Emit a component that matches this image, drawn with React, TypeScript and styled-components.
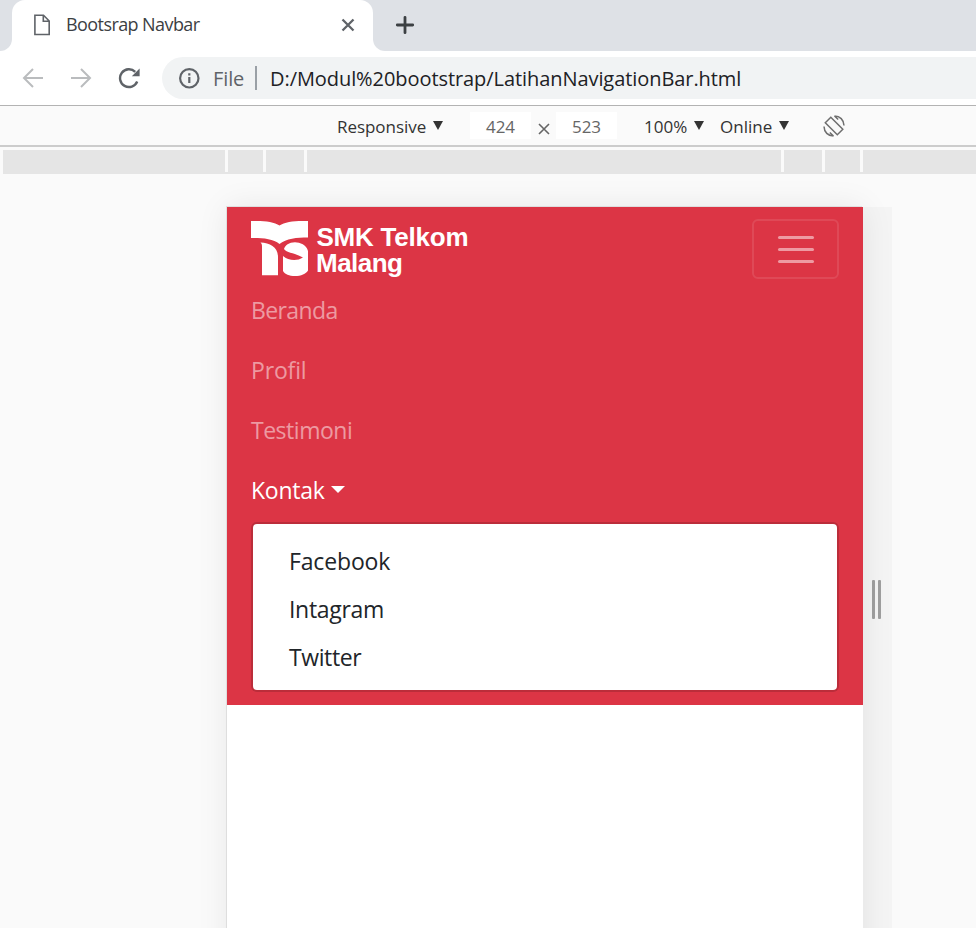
import React from "react";
import styled, { createGlobalStyle } from "styled-components";

const GlobalStyle = createGlobalStyle`
  *, *::before, *::after { box-sizing: border-box; }
  body { margin: 0; background: #fafafa; overflow: hidden; }
`;

const Window = styled.div`
  width: 976px;
  height: 928px;
  overflow: hidden;
  display: flex;
  flex-direction: column;
  background: #fafafa;
  font-family: "Open Sans", "Noto Sans", sans-serif;
`;

const Label = styled.span<{ $size: number; $spacing?: number; $color?: string }>`
  font-size: ${(p) => p.$size}px;
  letter-spacing: ${(p) => p.$spacing ?? 0}px;
  color: ${(p) => p.$color ?? "inherit"};
  white-space: nowrap;
  line-height: 1.2;
`;

const TabStrip = styled.div`
  flex: none;
  height: 51px;
  display: flex;
  background: #fff;
`;

const StripLeft = styled.div`
  width: 12px;
  background: #dee1e6;
  border-bottom-right-radius: 12px;
`;

const TabBack = styled.div`
  width: 361px;
  background: linear-gradient(#dee1e6 50%, #fff 50%);
`;

const Tab = styled.div`
  height: 51px;
  padding: 0 17px 2px 21px;
  display: flex;
  align-items: center;
  background: #fff;
  border-radius: 13px 13px 0 0;
`;

const TabTitle = styled.div`
  flex: 1;
  margin-left: 15px;
  display: flex;
`;

const StripRight = styled.div`
  flex: 1;
  padding: 0 0 2px 22px;
  display: flex;
  align-items: center;
  background: #dee1e6;
  border-bottom-left-radius: 12px;
`;

const Toolbar = styled.div`
  flex: none;
  height: 55px;
  display: flex;
  align-items: center;
  padding-left: 22px;
  background: #fff;
  border-bottom: 1px solid #b3b3b3;
`;

const NavIcons = styled.div`
  width: 140px;
  padding-bottom: 1px;
  display: flex;
  gap: 26px;
`;

const AddressBar = styled.div`
  flex: 1;
  height: 42px;
  padding-left: 16px;
  display: flex;
  align-items: center;
  background: #f1f3f4;
  border-radius: 21px 0 0 21px;
`;

const Scheme = styled.div`
  margin-left: 13px;
  padding-top: 2px;
  width: 32px;
  display: flex;
`;

const Address = styled.div`
  padding-top: 2px;
  display: flex;
`;

const Separator = styled.div`
  width: 2px;
  height: 24px;
  margin: 0 13px 0 10px;
  background: #9aa0a6;
`;

const DeviceBar = styled.div`
  flex: none;
  height: 41px;
  padding-left: 337px;
  display: flex;
  align-items: center;
  color: #333;
  background: #fafafa;
  border-bottom: 2px solid #ccc;
`;

const Select = styled.div<{ $width: number }>`
  width: ${(p) => p.$width}px;
  padding-top: 3px;
  display: flex;
  align-items: center;
  gap: 7px;
`;

const DownArrow = styled.div`
  margin-bottom: 3px;
  border: 5.5px solid transparent;
  border-top: 9px solid #333;
  border-bottom: 0;
`;

const SizeField = styled.div`
  width: 61px;
  height: 27px;
  padding-top: 3px;
  display: flex;
  align-items: center;
  justify-content: center;
  color: #666;
  background: #fff;
`;

const Times = styled.div`
  width: 25px;
  padding-top: 6px;
  display: flex;
  justify-content: center;
`;

const ZoomGap = styled.div`
  width: 27px;
`;

const Ruler = styled.div`
  flex: none;
  height: 24px;
  margin: 3px 0 0 3px;
  display: flex;
  background: #e5e5e5;
`;

const RulerSegment = styled.div<{ $width: number }>`
  width: ${(p) => p.$width}px;
  height: 22px;
  border-right: 3px solid #fafafa;
`;

const Stage = styled.div`
  flex: 1;
  padding: 33px 0 0 227px;
  display: flex;
`;

const Phone = styled.div`
  position: relative;
  width: 636px;
  background: #fff;
  box-shadow: -1px -1px 0 rgba(0, 0, 0, 0.08), 0 0 30px rgba(0, 0, 0, 0.08);
`;

const ResizeStrip = styled.div`
  width: 29px;
  height: 784px;
  display: flex;
  align-items: center;
  justify-content: center;
  gap: 3px;
  padding-right: 2px;
  background: #f4f4f4;
`;

const Grip = styled.div`
  width: 3px;
  height: 39px;
  border-radius: 1px;
  background: #9f9f9f;
`;

const Navbar = styled.nav`
  height: 498px;
  padding: 12px 24px;
  background: #dc3545;
`;

const NavHeader = styled.div`
  height: 62px;
  display: flex;
  justify-content: space-between;
`;

const Toggler = styled.button`
  width: 87px;
  height: 60px;
  padding: 0;
  display: flex;
  flex-direction: column;
  align-items: center;
  justify-content: center;
  gap: 9px;
  background: transparent;
  border: 2px solid rgba(255, 255, 255, 0.1);
  border-radius: 6px;
`;

const TogglerBar = styled.span`
  width: 36px;
  height: 3px;
  border-radius: 1.5px;
  background: rgba(255, 255, 255, 0.5);
`;

const NavLink = styled.a<{ $active?: boolean }>`
  height: 60px;
  display: flex;
  align-items: center;
  color: ${(p) => (p.$active ? "#fff" : "rgba(255, 255, 255, 0.5)")};
`;

const Caret = styled.span`
  margin: 0 0 3px 6px;
  border: 7.5px solid transparent;
  border-top-color: #fff;
  border-bottom: 0;
`;

const DropdownMenu = styled.div`
  height: 170px;
  margin-top: 1px;
  padding: 14px 36px 10px;
  color: #212529;
  background: #fff;
  background-clip: padding-box;
  border: 2px solid rgba(0, 0, 0, 0.15);
  border-radius: 6px;
`;

const DropdownItem = styled.a`
  height: 48px;
  display: flex;
  align-items: center;
`;

const LogoText = styled.text`
  font: bold 26px "Liberation Sans", Arial, sans-serif;
  fill: #fff;
`;

const Logo = () => (
  <svg width="230" height="62" viewBox="0 0 230 62">
    <g fill="#fff">
      <path d="M0 2 C12 1.500 23 2.500 28.500 6.500 C34 2.500 45 1.500 57 2 V18.500 C46 18.500 35 19.500 28.500 25 C22 19.500 11 19 0 19 Z" />
      <path d="M9.500 23.500 C19 24 27 28 27 38 V56.300 H11 V28 C11 26 11 25 9.500 23.500 Z" />
      <path d="M57 32 C55.500 26 49 23.300 44 23.300 C38 23.300 34 26.500 33 30 C36 34 44 34 52 38.500 C46 42.500 37 41.500 32 37 V52 C34 55.500 38 57 44 57 C50 57 55 55 57 51.500 Z" />
    </g>
    <LogoText x="65.500" y="27" textLength="152">SMK Telkom</LogoText>
    <LogoText x="65" y="52.500" textLength="87">Malang</LogoText>
  </svg>
);

const navLinks = [
  { text: "Beranda", spacing: -0.62 },
  { text: "Profil", spacing: -0.15 },
  { text: "Testimoni", spacing: -0.48 },
];

const contacts = [
  { text: "Facebook", spacing: -0.15 },
  { text: "Intagram", spacing: -0.3 },
  { text: "Twitter", spacing: -0.4 },
];

const rulerSegments = [225, 38, 41, 477, 41, 38];

export default function App() {
  return (
    <Window>
      <GlobalStyle />
      <TabStrip>
        <StripLeft />
        <TabBack>
          <Tab>
            <svg width="18" height="22" viewBox="0 0 18 22" fill="none" stroke="#5f6368" strokeWidth="1.600">
              <path d="M1.900 1.300 H10.500 L16.200 7 V20.500 H1.900 Z M10.300 1.500 V7.300 H16" />
            </svg>
            <TabTitle><Label $size={18} $spacing={-0.58} $color="#3c4043">Bootsrap Navbar</Label></TabTitle>
            <svg width="16" height="16" viewBox="0 0 16 16" stroke="#5f6368" strokeWidth="2.300">
              <path d="M2.500 2.500 L13.500 13.500 M13.500 2.500 L2.500 13.500" />
            </svg>
          </Tab>
        </TabBack>
        <StripRight>
          <svg width="20" height="20" viewBox="0 0 20 20" stroke="#3c4043" strokeWidth="2.800" strokeLinecap="round">
            <path d="M10 2.300 V17.700 M2.300 10 H17.700" />
          </svg>
        </StripRight>
      </TabStrip>
      <Toolbar>
        <NavIcons>
          <svg width="22" height="22" viewBox="0 0 22 22" fill="none" stroke="#babcbe" strokeWidth="2">
            <path d="M21 11 H2.500 M11 2 L2 11 L11 20" />
          </svg>
          <svg width="22" height="22" viewBox="0 0 22 22" fill="none" stroke="#babcbe" strokeWidth="2">
            <path d="M1 11 H19.500 M11 2 L20 11 L11 20" />
          </svg>
          <svg width="22" height="22" viewBox="0 0 22 22" fill="none" stroke="#5f6368" strokeWidth="2.400">
            <path d="M19.200 14.500 A8.900 8.900 0 1 1 17.200 4.800" />
            <path d="M21.600 1.500 V9.300 H13.800 Z" fill="#5f6368" stroke="none" />
          </svg>
        </NavIcons>
        <AddressBar>
          <svg width="22" height="22" viewBox="0 0 22 22" fill="none" stroke="#5f6368" strokeWidth="2.200">
            <circle cx="11.300" cy="11.300" r="9.200" />
            <path d="M11.300 10 V16 M11.300 6.200 V8.400" />
          </svg>
          <Scheme><Label $size={20} $spacing={-0.1} $color="#5f6368">File</Label></Scheme>
          <Separator />
          <Address>
            <Label $size={20} $spacing={-0.07} $color="#202124">D:/Modul%20bootstrap/LatihanNavigationBar.html</Label>
          </Address>
        </AddressBar>
      </Toolbar>
      <DeviceBar>
        <Select $width={133}><Label $size={17} $spacing={-0.05}>Responsive</Label><DownArrow /></Select>
        <SizeField><Label $size={17}>424</Label></SizeField>
        <Times>
          <svg width="12" height="12" viewBox="0 0 12 12" stroke="#666" strokeWidth="1.600"><path d="M1 1 L11 11 M11 1 L1 11" /></svg>
        </Times>
        <SizeField><Label $size={17}>523</Label></SizeField>
        <ZoomGap />
        <Select $width={76}><Label $size={17}>100%</Label><DownArrow /></Select>
        <Select $width={103}><Label $size={17}>Online</Label><DownArrow /></Select>
        <svg width="22" height="22" viewBox="0 0 22 22" fill="none" stroke="#6e6e6e" strokeWidth="1.500">
          <path d="M7.800 2.300 L19.800 14.300 L14.300 19.800 L2.300 7.800 Z" />
          <path d="M11.500 1 C17 1 20.800 4.800 21 10.500 M11.500 1 L15.200 4.500 M10.500 21 C5 21 1.200 17.200 1 11.500 M10.500 21 L6.800 17.500" />
        </svg>
      </DeviceBar>
      <Ruler>
        {rulerSegments.map((width, i) => (
          <RulerSegment key={i} $width={width} />
        ))}
      </Ruler>
      <Stage>
        <Phone>
          <Navbar>
            <NavHeader>
              <Logo />
              <Toggler><TogglerBar /><TogglerBar /><TogglerBar /></Toggler>
            </NavHeader>
            {navLinks.map((link) => (
              <NavLink key={link.text}><Label $size={23} $spacing={link.spacing}>{link.text}</Label></NavLink>
            ))}
            <NavLink $active><Label $size={23} $spacing={-0.25}>Kontak</Label><Caret /></NavLink>
            <DropdownMenu>
              {contacts.map((item) => (
                <DropdownItem key={item.text}><Label $size={23} $spacing={item.spacing}>{item.text}</Label></DropdownItem>
              ))}
            </DropdownMenu>
          </Navbar>
        </Phone>
        <ResizeStrip><Grip /><Grip /></ResizeStrip>
      </Stage>
    </Window>
  );
}
